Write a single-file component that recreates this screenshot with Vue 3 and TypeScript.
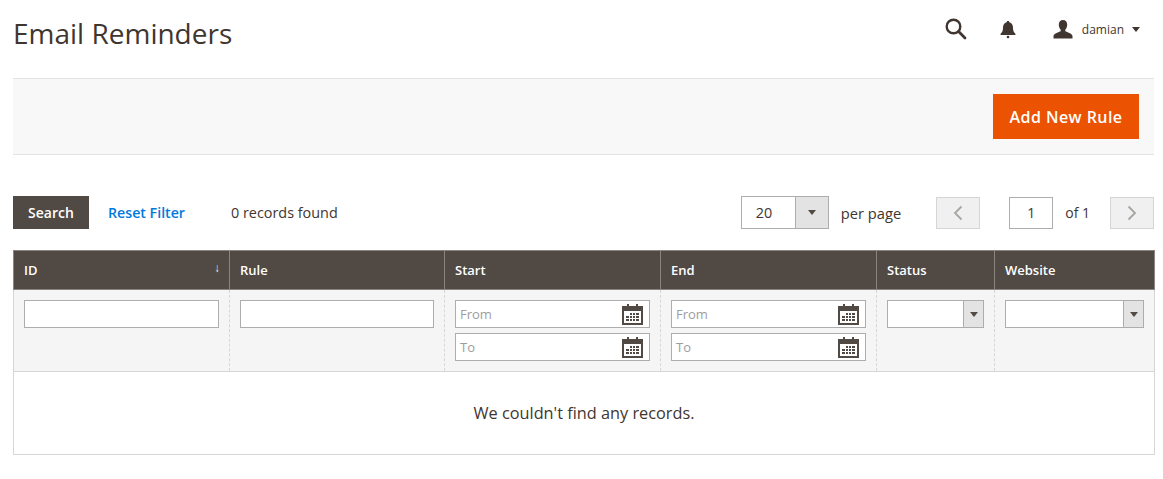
<template>
  <div class="page">
    <header class="topbar">
      <h1>Email Reminders</h1>
      <div class="top-actions">
        <svg class="icon-search" width="24" height="24" viewBox="0 0 24 24" fill="none">
          <circle cx="9.500" cy="9.500" r="6.800" stroke="#41362f" stroke-width="2.400" />
          <path d="M14.600 14.600 21 21" stroke="#41362f" stroke-width="2.800" stroke-linecap="round" />
        </svg>
        <svg class="icon-bell" width="16" height="19" viewBox="0 0 16 19">
          <path
            d="M8 1c.8 0 1.300.5 1.400 1.200C11.800 2.900 13 5 13 7.500c0 3 .6 4.600 2.500 6.500v1H.5v-1C2.400 12.100 3 10.500 3 7.500 3 5 4.200 2.900 6.600 2.200 6.700 1.500 7.200 1 8 1Z"
            fill="#41362f"
          />
          <circle cx="8" cy="17" r="1.300" fill="#41362f" />
        </svg>
        <div class="user">
          <svg width="20" height="19" viewBox="0 0 20 19">
            <path
              d="M10 0c2.600 0 4.200 1.900 4.200 4.700 0 2-.8 3.800-1.900 5v1.500c1.800.9 6.700 2 7.200 4.800V18.500H.5V16c.5-2.800 5.400-3.900 7.200-4.800V9.700c-1.100-1.200-1.900-3-1.900-5C5.800 1.900 7.400 0 10 0Z"
              fill="#41362f"
            />
          </svg>
          <span>damian</span>
          <i class="caret small"></i>
        </div>
      </div>
    </header>

    <div class="action-bar">
      <button type="button" class="primary">Add New Rule</button>
    </div>

    <div class="toolbar">
      <button type="button" class="search">Search</button>
      <a class="reset">Reset Filter</a>
      <span class="count">0 records found</span>
      <div class="pager">
        <div class="per-page">
          <span class="value">20</span>
          <span class="toggle"><i class="caret"></i></span>
        </div>
        <span class="per-label">per page</span>
        <button type="button" class="page-btn prev" aria-label="Previous">
          <svg width="10" height="16" viewBox="0 0 10 16" fill="none">
            <path d="M8.500 1.500 2 8l6.500 6.500" stroke="#a8a5a2" stroke-width="1.800" />
          </svg>
        </button>
        <span class="current">1</span>
        <span class="of">of 1</span>
        <button type="button" class="page-btn" aria-label="Next">
          <svg width="10" height="16" viewBox="0 0 10 16" fill="none">
            <path d="M1.500 1.500 8 8l-6.500 6.500" stroke="#a8a5a2" stroke-width="1.800" />
          </svg>
        </button>
      </div>
    </div>

    <table class="grid">
      <colgroup>
        <col v-for="column in columns" :key="column.label" :style="{ width: column.width + 'px' }" />
      </colgroup>
      <thead>
        <tr>
          <th v-for="column in columns" :key="column.label">
            {{ column.label }}
            <span v-if="column.sorted" class="sort">↓</span>
          </th>
        </tr>
      </thead>
      <tbody>
        <tr class="filters">
          <td v-for="column in columns" :key="column.label">
            <input v-if="column.filter === 'text'" class="field" type="text" />
            <template v-else-if="column.filter === 'date'">
              <div v-for="hint in ['From', 'To']" :key="hint" class="date">
                <span>{{ hint }}</span>
                <svg width="21" height="21" viewBox="0 0 21 21">
                  <path d="M0 2h21v19H0z" fill="#514943" />
                  <path d="M2 7h17v12H2z" fill="#fff" />
                  <path d="M5 0h2v5H5zM14 0h2v5h-2z" fill="#514943" />
                  <path
                    d="M8 9h2v2H8zM11 9h2v2h-2zM14 9h3v2h-3zM4 12h3v2H4zM8 12h2v2H8zM11 12h2v2h-2zM14 12h3v2h-3zM4 15h3v2H4zM8 15h2v2H8zM11 15h2v2h-2zM14 15h3v2h-3z"
                    fill="#514943"
                  />
                </svg>
              </div>
            </template>
            <div v-else class="select">
              <span class="toggle"><i class="caret"></i></span>
            </div>
          </td>
        </tr>
        <tr>
          <td class="empty" :colspan="columns.length">We couldn't find any records.</td>
        </tr>
      </tbody>
    </table>
  </div>
</template>

<script setup lang="ts">
interface Column {
  label: string
  width: number
  filter: 'text' | 'date' | 'select'
  sorted?: boolean
}

const columns: Column[] = [
  { label: 'ID', width: 216, filter: 'text', sorted: true },
  { label: 'Rule', width: 215, filter: 'text' },
  { label: 'Start', width: 216, filter: 'date' },
  { label: 'End', width: 216, filter: 'date' },
  { label: 'Status', width: 118, filter: 'select' },
  { label: 'Website', width: 160, filter: 'select' },
]
</script>

<style scoped>
.page {
  width: 1141px;
  padding-left: 13px;
  color: #41362f;
  font-family: 'Open Sans', sans-serif;
  font-size: 14px;
}

.topbar {
  display: flex;
  justify-content: space-between;
  height: 78px;
}

h1 {
  margin: 13px 0 0;
  font-size: 28px;
  font-weight: 400;
  line-height: 40px;
}

.top-actions {
  display: flex;
  align-items: center;
  height: 58px;
  padding-right: 14px;
}

.icon-search {
  margin-right: 32px;
}

.icon-bell {
  margin-right: 37px;
}

.user {
  display: flex;
  align-items: center;
  font-size: 12px;
}

.user span {
  margin: 0 8px 0 9px;
}

.caret {
  display: block;
  width: 0;
  height: 0;
  border-top: 5px solid #514943;
  border-right: 4px solid transparent;
  border-left: 4px solid transparent;
}

.caret.small {
  border-top-color: #41362f;
}

.action-bar {
  display: flex;
  justify-content: flex-end;
  height: 77px;
  padding: 15px 15px 0 0;
  box-sizing: border-box;
  border-top: 1px solid #e3e3e3;
  border-bottom: 1px solid #e3e3e3;
  background: #f8f8f8;
}

.primary {
  width: 146px;
  height: 45px;
  border: 0;
  background: #eb5202;
  color: #fff;
  font: 600 16px 'Open Sans', sans-serif;
  letter-spacing: 0.45px;
}

.toolbar {
  display: flex;
  align-items: center;
  height: 33px;
  margin-top: 41px;
  margin-bottom: 21px;
}

.search {
  width: 76px;
  height: 33px;
  border: 0;
  background: #514943;
  color: #fff;
  font: 600 14px 'Open Sans', sans-serif;
}

.reset {
  margin-left: 19px;
  color: #007bdb;
  font-size: 14.2px;
  font-weight: 600;
}

.count {
  margin-left: 46px;
  font-size: 14.4px;
}

.pager {
  display: flex;
  align-items: flex-end;
  height: 33px;
  margin-left: auto;
}

.per-page {
  display: flex;
  width: 88px;
  height: 33px;
  box-sizing: border-box;
  border: 1px solid #adadad;
  background: #fff;
}

.per-page .value {
  flex: 1;
  padding-left: 14px;
  font-size: 14.4px;
  line-height: 31px;
}

.per-page .toggle {
  width: 32px;
}

.toggle {
  display: flex;
  align-items: center;
  justify-content: center;
  border-left: 1px solid #adadad;
  background: #e3e3e3;
}

.per-label,
.of {
  align-self: center;
}

.per-label {
  margin: 0 35px 0 12px;
  font-size: 14.7px;
}

.page-btn {
  display: flex;
  align-items: center;
  justify-content: center;
  width: 44px;
  height: 32px;
  padding: 0;
  border: 1px solid #d5d5d5;
  background: #f0f0f0;
}

.prev {
  margin-right: 29px;
}

.current {
  width: 44px;
  height: 32px;
  box-sizing: border-box;
  border: 1px solid #adadad;
  background: #fff;
  line-height: 30px;
  text-align: center;
}

.of {
  margin: 0 20px 0 12px;
}

.grid {
  width: 1141px;
  border-collapse: collapse;
  table-layout: fixed;
}

th {
  position: relative;
  height: 39px;
  box-sizing: border-box;
  padding: 0 10px;
  border: 1px solid #8a837f;
  background: #514943;
  color: #fff;
  font-size: 13px;
  font-weight: 600;
  text-align: left;
}

.sort {
  position: absolute;
  top: 8px;
  right: 9px;
  font-size: 12px;
  font-weight: 400;
  color: #e6e3e0;
}

.filters td {
  height: 82px;
  box-sizing: border-box;
  padding: 10px 10px 0;
  border-right: 1px dashed #d6d6d6;
  background: #f5f5f5;
  vertical-align: top;
}

.filters td:first-child {
  border-left: 1px solid #d6d6d6;
}

.filters td:last-child {
  border-right: 1px solid #d6d6d6;
}

.field,
.date,
.select {
  display: flex;
  width: 100%;
  height: 28px;
  box-sizing: border-box;
  border: 1px solid #adadad;
  background: #fff;
}

.field {
  display: block;
  padding: 0;
}

.date {
  align-items: center;
  justify-content: space-between;
  padding: 0 6px 0 4px;
  color: #9d9d9d;
  font-size: 13px;
}

.date + .date {
  margin-top: 5px;
}

.select {
  justify-content: flex-end;
}

.select .toggle {
  width: 19px;
}

.empty {
  height: 83px;
  box-sizing: border-box;
  border: 1px solid #d6d6d6;
  color: #41362f;
  font-size: 16.3px;
  text-align: center;
}
</style>

<style>
html,
body {
  margin: 0;
  background: #fff;
}
</style>
